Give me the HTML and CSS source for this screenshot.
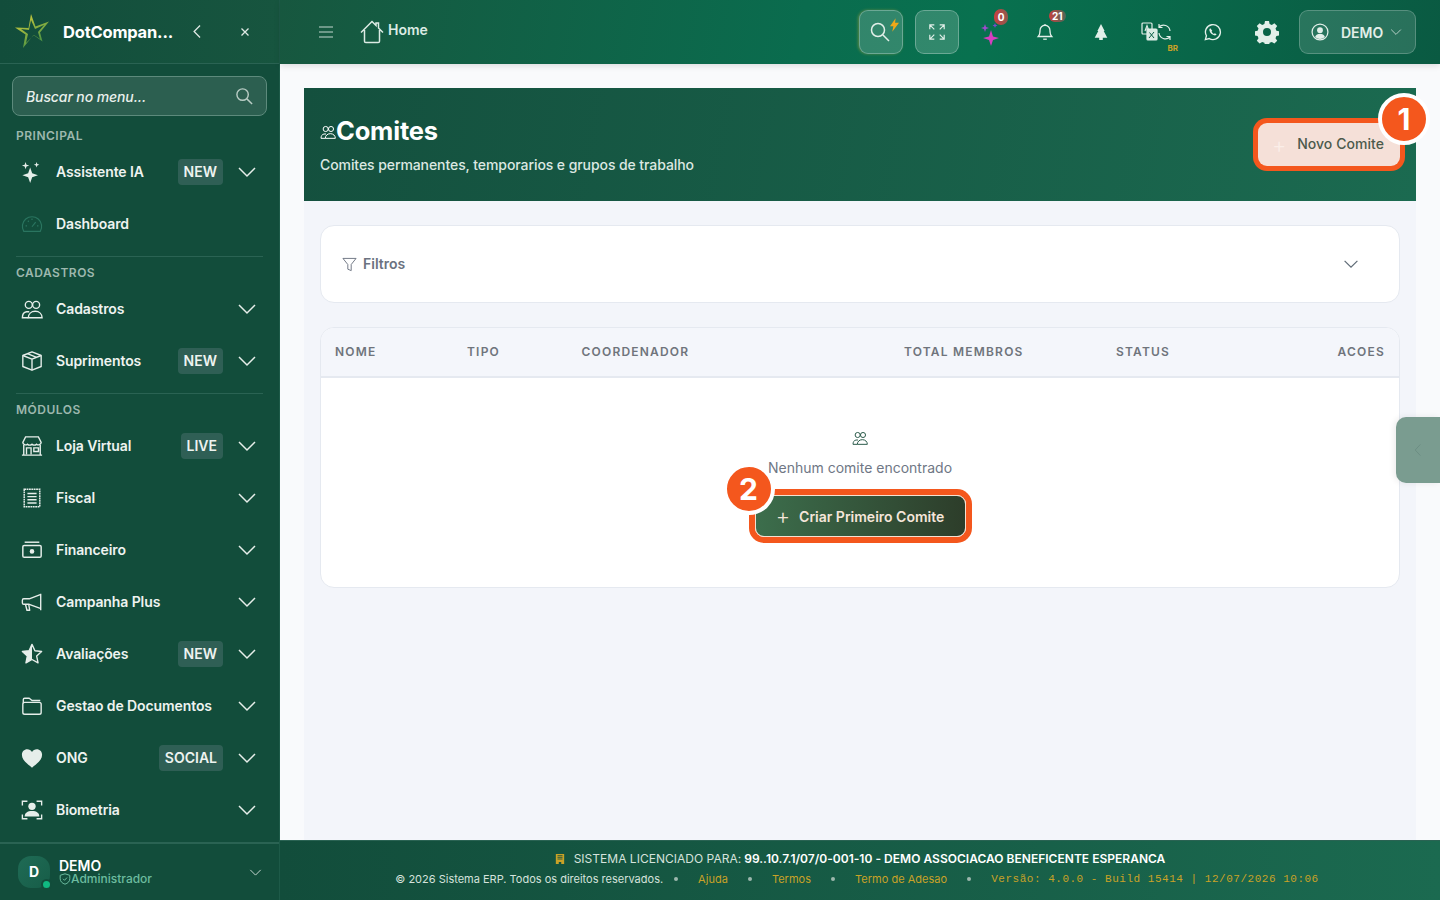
FILE: index.html
```html
<!DOCTYPE html>
<html lang="pt-BR">
<head>
  <meta charset="utf-8">
  <title>Comites</title>
  <link rel="stylesheet" href="styles.css">
</head>
<body>
<svg class="sprite" xmlns="http://www.w3.org/2000/svg">
  <symbol id="i-chev" viewBox="0 0 20 20"><path d="M2 6l8 8 8-8" fill="none" stroke="currentColor" stroke-width="1.5"/></symbol>
  <symbol id="i-people" viewBox="0 0 24 24"><g fill="none" stroke="currentColor" stroke-width="1.5"><circle cx="8.5" cy="7.5" r="3.8"/><circle cx="16.5" cy="7.5" r="3.8"/><path d="M8 21.5H1.5c0-3.5 1.5-6 4.5-6.5h3"/><path d="M8 21.5c0-4 3-7 7.5-7s7.5 3 7.5 7z"/></g></symbol>
</svg>

<div class="app">
  <aside class="sidebar">
    <div class="brand">
      <svg class="brand-logo" viewBox="0 0 40 40">
        <defs>
          <linearGradient id="star" x1="0" y1="0" x2="0.6" y2="1"><stop offset="0" stop-color="#e8d53a"/><stop offset="1" stop-color="#3f8f45"/></linearGradient>
        </defs>
        <path d="M19 2l4.5 12.5L37 9.5l-9 11 2.5 9-9-6.5L11 36l2.5-13.5L3 15.5l13.5.5zM19 8l-2 10-8-1 7 5-2 9 8-8 6 4-2-7 6-7-9 4z" fill="url(#star)" fill-rule="evenodd"/>
      </svg>
      <span class="brand-name">DotCompan...</span>
      <svg class="brand-back" viewBox="0 0 20 20"><path d="M13 3l-7 7 7 7" fill="none" stroke="currentColor" stroke-width="1.5"/></svg>
      <svg class="brand-close" viewBox="0 0 10 10"><path d="M1.5 1.5l7 7M8.5 1.5l-7 7" fill="none" stroke="currentColor" stroke-width="1.3"/></svg>
    </div>

    <div class="menu-search">
      <span>Buscar no menu...</span>
      <svg viewBox="0 0 20 20"><g fill="none" stroke="currentColor" stroke-width="1.5"><circle cx="8" cy="8" r="6"/><path d="M12.5 12.5L18 18"/></g></svg>
    </div>

    <nav class="menu">
      <div class="menu-label first">PRINCIPAL</div>
      <a class="menu-item">
        <svg class="menu-icon" viewBox="0 0 24 24" fill="currentColor"><path d="M10 7l2.2 6.300L18.5 15.500l-6.300 2.200L10 24l-2.200-6.300L1.500 15.500l6.300-2.200zM5 1l1 3 3 1-3 1-1 3-1-3-3-1 3-1zM17 1l.8 2.200L20 4l-2.200.8L17 7l-.8-2.200L14 4l2.200-.8z"/></svg>
        <span class="menu-text">Assistente IA</span><span class="tag">NEW</span>
        <svg class="chev"><use href="#i-chev"/></svg>
      </a>
      <a class="menu-item">
        <svg class="menu-icon dim" viewBox="0 0 24 24"><g fill="none" stroke="currentColor" stroke-width="1.3"><path d="M3 20a10.500 10.500 0 1 1 18 0z"/><path d="M12 15l4-5M5 14h1.500M17.500 14H19M7.500 8.500l1 1M12 6v1.500"/></g></svg>
        <span class="menu-text">Dashboard</span>
      </a>

      <div class="menu-rule"></div>
      <div class="menu-label">CADASTROS</div>
      <a class="menu-item">
        <svg class="menu-icon"><use href="#i-people"/></svg>
        <span class="menu-text">Cadastros</span>
        <svg class="chev"><use href="#i-chev"/></svg>
      </a>
      <a class="menu-item">
        <svg class="menu-icon" viewBox="0 0 24 24"><g fill="none" stroke="currentColor" stroke-width="1.5" stroke-linejoin="round"><path d="M12 2l10 4v12l-10 4-10-4V6z"/><path d="M2 6l10 4 10-4M12 10v12M7 4l10 4"/></g></svg>
        <span class="menu-text">Suprimentos</span><span class="tag">NEW</span>
        <svg class="chev"><use href="#i-chev"/></svg>
      </a>

      <div class="menu-rule"></div>
      <div class="menu-label">MÓDULOS</div>
      <a class="menu-item">
        <svg class="menu-icon" viewBox="0 0 24 24"><g fill="none" stroke="currentColor" stroke-width="1.5"><path d="M5 2h14l3 6a3 3 0 0 1-5 2 3.5 3.5 0 0 1-5 0 3.5 3.5 0 0 1-5 0 3 3 0 0 1-5-2z"/><path d="M3 11v10.5M21 11v10.5M1 22h22M6 21v-7h5v7M14 14h5v4h-5z"/></g></svg>
        <span class="menu-text">Loja Virtual</span><span class="tag">LIVE</span>
        <svg class="chev"><use href="#i-chev"/></svg>
      </a>
      <a class="menu-item">
        <svg class="menu-icon" viewBox="0 0 24 24"><g fill="none" stroke="currentColor" stroke-width="1.6"><path d="M3.5 2.5h17v19h-17z" stroke-dasharray="2 .6"/><path d="M7 7h10M7 10.5h10M7 14h10M7 17.5h10"/></g></svg>
        <span class="menu-text">Fiscal</span>
        <svg class="chev"><use href="#i-chev"/></svg>
      </a>
      <a class="menu-item">
        <svg class="menu-icon" viewBox="0 0 24 24"><g fill="none" stroke="currentColor" stroke-width="1.6"><rect x="2" y="7" width="20" height="13" rx="1.5"/><path d="M4 3.5h16"/></g><circle cx="12" cy="13.5" r="2.5" fill="currentColor"/></svg>
        <span class="menu-text">Financeiro</span>
        <svg class="chev"><use href="#i-chev"/></svg>
      </a>
      <a class="menu-item">
        <svg class="menu-icon" viewBox="0 0 24 24"><g fill="none" stroke="currentColor" stroke-width="1.5" stroke-linejoin="round"><path d="M21.5 3v18M21 4L9 8.5H3A1.5 1.5 0 0 0 1.500 10v3A1.500 1.500 0 0 0 3 14.500h6L21 19"/><path d="M5 15l1.500 6h3L8.500 15"/></g></svg>
        <span class="menu-text">Campanha Plus</span>
        <svg class="chev"><use href="#i-chev"/></svg>
      </a>
      <a class="menu-item">
        <svg class="menu-icon" viewBox="0 0 24 24"><path d="M12 1.500l3.200 7 7.300.8-5.400 5 1.500 7.400L12 18l-6.600 3.700 1.500-7.400-5.400-5 7.300-.8z" fill="none" stroke="currentColor" stroke-width="1.5" stroke-linejoin="round"/><path d="M12 1.500l-3.200 7-7.300.8 5.400 5-1.500 7.400L12 18z" fill="currentColor"/></svg>
        <span class="menu-text">Avaliações</span><span class="tag">NEW</span>
        <svg class="chev"><use href="#i-chev"/></svg>
      </a>
      <a class="menu-item">
        <svg class="menu-icon" viewBox="0 0 24 24"><g fill="none" stroke="currentColor" stroke-width="1.5" stroke-linejoin="round"><path d="M2.500 9V5A1.500 1.500 0 0 1 4 3.500h5L12 6h9"/><rect x="2" y="8" width="20" height="13" rx="2"/></g></svg>
        <span class="menu-text">Gestao de Documentos</span>
        <svg class="chev"><use href="#i-chev"/></svg>
      </a>
      <a class="menu-item">
        <svg class="menu-icon" viewBox="0 0 24 24"><path d="M12 22.500C5 17 1 13.500 1 8.500 1 5 3.500 2.500 6.800 2.500c2.200 0 4 1 5.200 3 1.200-2 3-3 5.200-3C20.500 2.500 23 5 23 8.500c0 5-4 8.500-11 14z" fill="currentColor"/></svg>
        <span class="menu-text">ONG</span><span class="tag">SOCIAL</span>
        <svg class="chev"><use href="#i-chev"/></svg>
      </a>
      <a class="menu-item">
        <svg class="menu-icon" viewBox="0 0 24 24"><g fill="none" stroke="currentColor" stroke-width="1.5"><path d="M1.500 7V2.500H7M17 2.500h5.500V7M1.500 17v4.500H7M17 21.500h5.500V17"/></g><circle cx="12" cy="8" r="4" fill="currentColor"/><path d="M4 19c0-4 3-6 8-6s8 2 8 6z" fill="currentColor"/></svg>
        <span class="menu-text">Biometria</span>
        <svg class="chev"><use href="#i-chev"/></svg>
      </a>
    </nav>

    <div class="side-user">
      <div class="avatar">D<span class="avatar-dot"></span></div>
      <div class="side-user-info">
        <div class="side-user-name">DEMO</div>
        <div class="side-user-role">
          <svg viewBox="0 0 12 12"><path d="M6 .8l4.800 1.500v3.400c0 2.800-2 4.600-4.800 5.500C3.200 10.300 1.200 8.500 1.200 5.700V2.300zM4 5.800l1.500 1.500L8 4.600" fill="none" stroke="currentColor"/></svg>Administrador
        </div>
      </div>
      <svg class="side-user-chev"><use href="#i-chev"/></svg>
    </div>
  </aside>

  <div class="main">
    <header class="topbar">
      <svg class="burger" viewBox="0 0 14 12"><path d="M0 1h14M0 6h14M0 11h14" stroke="currentColor" stroke-width="1.2"/></svg>
      <svg class="home-icon" viewBox="0 0 24 24"><path d="M1 12.500L12 1.500l4 4V3h2.500v5L23 12.500M4.500 10v11.200a1.300 1.300 0 0 0 1.300 1.300h12.400a1.300 1.300 0 0 0 1.300-1.300V10" fill="none" stroke="currentColor" stroke-width="1.5"/></svg>
      <span class="home-text">Home</span>

      <div class="tools">
        <button class="tool boxed glow">
          <svg class="ic-search" viewBox="0 0 20 20"><g fill="none" stroke="currentColor" stroke-width="1.5"><circle cx="8" cy="8" r="6.500"/><path d="M13 13l6 6"/></g></svg>
          <svg class="bolt" viewBox="0 0 8 12"><path d="M5 0L0 7h3l-1 5 6-8H4.500z" fill="#f0a818"/></svg>
        </button>
        <button class="tool boxed">
          <svg class="ic20" viewBox="0 0 20 20"><path d="M2 7V2h5M2 2l5 5M18 7V2h-5M18 2l-5 5M2 13v5h5M2 18l5-5M18 13v5h-5M18 18l-5-5" fill="none" stroke="currentColor" stroke-width="1.3"/></svg>
        </button>
        <button class="tool icons-start">
          <svg class="ic24" viewBox="0 0 24 24"><path d="M11 8l2 6.500 6 1.500-6 2-2 6-2-6-6-2 6-1.500z" fill="#d63fc0"/><path d="M5 1l1 3 3 1-3 1-1 3-1-3-3-1 3-1z" fill="#a04ad0" transform="translate(0 1)"/><path d="M15 1l.7 1.800 1.800.7-1.800.7L15 6l-.7-1.800-1.800-.7 1.800-.7z" fill="#7a4ad0"/></svg>
          <span class="count zero">0</span>
        </button>
        <button class="tool">
          <svg class="ic20" viewBox="0 0 20 20"><g fill="none" stroke="currentColor" stroke-width="1.4"><path d="M10 2.500A5.500 5.500 0 0 0 4.500 8c0 4-1 6-2 7h15c-1-1-2-3-2-7A5.500 5.500 0 0 0 10 2.500zM10 1v1.500"/><path d="M8 18h4"/></g></svg>
          <span class="count many">21</span>
        </button>
        <button class="tool">
          <svg class="ic20" viewBox="0 0 20 20"><path d="M10 1l4 8h-1l4 7.500h-5V19H8v-2.500H3L7 9H6z" fill="currentColor"/></svg>
        </button>
        <button class="tool">
          <svg class="ic-lang" viewBox="0 0 30 20"><g fill="none" stroke="currentColor" stroke-width="1.2"><rect x="1" y="1" width="10" height="11" rx="1"/><rect x="6" y="7" width="10" height="11" rx="1" fill="#d8ebe2"/><path d="M29 9a6.500 6.500 0 0 0-11-4M18 11a6.500 6.500 0 0 0 11 4M18 2v3.500h3.500M29 18v-3.500h-3.500"/></g><path d="M4 9l2-5.500L8 9M4.700 7h2.600" fill="none" stroke="currentColor" stroke-width="1.1"/><path d="M8 16l5-6M8.500 10.500L13 16" stroke="#0a5f47"/></svg>
          <span class="lang-code">BR</span>
        </button>
        <button class="tool">
          <svg class="ic20" viewBox="0 0 20 20"><path d="M1.500 18.500l1.200-4.300a8.300 8.300 0 1 1 3.100 3.100z" fill="none" stroke="currentColor" stroke-width="1.5"/><path d="M7 5.800c-1 .5-1.300 1.700-.8 3 .8 2.200 2.600 4 5 4.800 1.300.4 2.400 0 2.800-1l-2-1.300-1 .8c-1.100-.5-2-1.400-2.600-2.600l.8-1z" fill="currentColor"/></svg>
        </button>
        <button class="tool gear">
          <svg class="ic26" viewBox="0 0 24 24"><path fill-rule="evenodd" d="M10 1h4l.6 3 2.200.9 2.600-1.700 2.800 2.800-1.700 2.600.9 2.200 3 .6v4l-3 .6-.9 2.200 1.700 2.600-2.800 2.800-2.600-1.700-2.200.9-.6 3h-4l-.6-3-2.200-.9-2.600 1.700-2.800-2.800 1.700-2.600-.9-2.200-3-.6v-4l3-.6.900-2.200L1.800 6l2.800-2.800 2.600 1.700L9.400 4zM12 8a4 4 0 1 0 0 8 4 4 0 0 0 0-8z" fill="currentColor"/></svg>
        </button>
        <button class="user-btn">
          <svg class="ic18" viewBox="0 0 20 20"><g fill="none" stroke="currentColor" stroke-width="1.4"><circle cx="10" cy="10" r="8.800"/></g><circle cx="10" cy="8" r="3.200" fill="currentColor"/><path d="M4.500 15.500c1-2.500 3-3.500 5.500-3.500s4.500 1 5.500 3.500a8 8 0 0 1-11 0z" fill="currentColor"/></svg>
          <span>DEMO</span>
          <svg class="user-chev"><use href="#i-chev"/></svg>
        </button>
      </div>
    </header>

    <main class="content">
      <section class="hero">
        <div class="hero-text">
          <h1><svg class="hero-icon"><use href="#i-people"/></svg>Comites</h1>
          <p>Comites permanentes, temporarios e grupos de trabalho</p>
        </div>
        <button class="btn-new tour">
          <span class="btn-plus">+</span><span class="btn-new-text">Novo Comite</span>
          <span class="tour-badge">1</span>
        </button>
      </section>

      <div class="page-body">
        <section class="card filters">
          <svg class="filter-icon" viewBox="0 0 16 16"><path d="M1 1.500h14L9.800 8v6.500l-3.600-1.500V8z" fill="none" stroke="currentColor"/></svg>
          <span class="filter-text">Filtros</span>
          <svg class="filter-chev"><use href="#i-chev"/></svg>
        </section>

        <section class="card list">
          <div class="list-head">
            <span>NOME</span>
            <span>TIPO</span>
            <span>COORDENADOR</span>
            <span>TOTAL MEMBROS</span>
            <span>STATUS</span>
            <span class="right">ACOES</span>
          </div>
          <div class="empty">
            <svg class="empty-icon"><use href="#i-people"/></svg>
            <p>Nenhum comite encontrado</p>
            <button class="btn-first tour">
              <span class="btn-first-plus">+</span>Criar Primeiro Comite
              <span class="tour-badge left">2</span>
            </button>
          </div>
        </section>
      </div>
    </main>

    <footer class="footer">
      <div class="license">
        <svg viewBox="0 0 12 12"><path d="M1 0h10v12H7.500V9.500h-3V12H1z" fill="#c9a227"/><path d="M3 2h6M3 4h6M3 6h6" stroke="#14503e"/></svg>
        <span>SISTEMA LICENCIADO PARA:</span> <b>99..10.7.1/07/0-001-10 - DEMO ASSOCIACAO BENEFICENTE ESPERANCA</b>
      </div>
      <div class="foot-links">
        <span class="copy">© 2026 Sistema ERP. Todos os direitos reservados.</span>
        <i></i><a>Ajuda</a>
        <i></i><a>Termos</a>
        <i></i><a>Termo de Adesao</a>
        <i></i><code>Versão: 4.0.0 - Build 15414 | 12/07/2026 10:06</code>
      </div>
    </footer>
  </div>

  <div class="side-handle">
    <svg viewBox="0 0 10 16"><path d="M8 1L1.500 8 8 15" fill="none" stroke="currentColor"/></svg>
  </div>
</div>
</body>
</html>
```

FILE: styles.css
```css
html, body {
  margin: 0;
  padding: 0;
  height: 100%;
}

body {
  font-family: Inter, "Liberation Sans", sans-serif;
  overflow: hidden;
}

.sprite {
  display: none;
}

button {
  font-family: inherit;
  border: 0;
  cursor: pointer;
}

.app {
  display: flex;
  width: 1440px;
  height: 900px;
  position: relative;
  overflow: hidden;
}

/* sidebar */
.sidebar {
  flex: 0 0 280px;
  width: 280px;
  display: flex;
  flex-direction: column;
  background: #124d3b;
  color: #eef3f0;
  border-right: 1px solid #1d5a48;
  box-sizing: border-box;
}

.brand {
  height: 64px;
  flex: 0 0 64px;
  box-sizing: border-box;
  display: flex;
  align-items: center;
  padding-left: 12px;
  border-bottom: 1px solid #2a6353;
  background: linear-gradient(90deg, #124d3b, #17553f);
}

.brand-logo {
  width: 40px;
  height: 40px;
  flex: none;
}

.brand-name {
  margin-left: 11px;
  width: 112px;
  font-size: 16.5px;
  font-weight: 700;
  color: #fff;
  white-space: nowrap;
  letter-spacing: -0.2px;
}

.brand-back {
  width: 17px;
  height: 17px;
  margin-left: 14px;
  color: #dfe9e4;
}

.brand-close {
  width: 10px;
  height: 10px;
  margin-left: 34px;
  color: #dfe9e4;
}

.menu-search {
  margin: 12px 12px 0;
  height: 40px;
  flex: none;
  display: flex;
  align-items: center;
  justify-content: space-between;
  padding: 0 12px 0 13px;
  box-sizing: border-box;
  width: 255px;
  background: #2c5f50;
  border: 1px solid #5d8a7c;
  border-radius: 8px;
  font-size: 14px;
  font-style: italic;
  font-weight: 500;
  letter-spacing: -0.1px;
  color: #e9f0ec;
}

.menu-search svg {
  width: 19px;
  height: 19px;
  color: #b9cdc5;
}

.menu {
  flex: 1;
  overflow: hidden;
}

.menu-label {
  height: 19px;
  margin-top: 7px;
  padding-left: 16px;
  font-size: 12px;
  line-height: 18px;
  font-weight: 600;
  letter-spacing: 0.5px;
  color: #9db8ae;
}

.menu-label.first {
  margin-top: 11px;
  height: 18px;
  margin-bottom: 1px;
}

.menu-rule {
  margin: 6px 16px 0;
  height: 1px;
  background: #2a6353;
}

.menu-item {
  height: 52px;
  display: flex;
  align-items: center;
  padding: 0 22px 0 20px;
  font-size: 14px;
  font-weight: 600;
  letter-spacing: -0.1px;
}

.menu-icon {
  width: 22px;
  height: 22px;
  flex: none;
  margin: 0 13px 0 1px;
  color: #e6eeea;
}

.menu-icon.dim {
  color: #2a7560;
}

.menu-text {
  flex: 1;
  white-space: nowrap;
  padding-bottom: 2px;
}

.tag {
  height: 26px;
  line-height: 26px;
  padding: 0 6px;
  margin-right: 14px;
  border-radius: 4px;
  background: #2f5f55;
  font-size: 14px;
  font-weight: 600;
  letter-spacing: 0;
}

.chev {
  width: 20px;
  height: 20px;
  flex: none;
  margin-left: auto;
  color: #e6eeea;
}

.tag + .chev {
  margin-left: 0;
}

.side-user {
  flex: 0 0 58px;
  box-sizing: border-box;
  height: 58px;
  display: flex;
  align-items: center;
  padding: 0 17px 0 18px;
  border-top: 2px solid #2a6353;
}

.avatar {
  width: 32px;
  height: 32px;
  flex: none;
  position: relative;
  border-radius: 13px;
  background: linear-gradient(135deg, #1f6b55, #175d48);
  color: #fff;
  font-size: 14px;
  font-weight: 700;
  line-height: 32px;
  text-align: center;
}

.avatar-dot {
  position: absolute;
  right: -2px;
  bottom: -2px;
  width: 7px;
  height: 7px;
  border-radius: 50%;
  background: #10b981;
  border: 2px solid #124d3b;
}

.side-user-info {
  margin-left: 9px;
  flex: 1;
}

.side-user-name {
  font-size: 14px;
  line-height: 13px;
  font-weight: 600;
  color: #fff;
}

.side-user-role {
  display: flex;
  align-items: center;
  font-size: 12px;
  line-height: 14px;
  font-weight: 500;
  color: #6cbc9f;
}

.side-user-role svg {
  width: 12px;
  height: 12px;
}

.side-user-chev {
  width: 13px;
  height: 13px;
  color: #c9d8d2;
}

/* main */
.main {
  flex: 1;
  min-width: 0;
  display: flex;
  flex-direction: column;
  background: #f9fafc;
}

.topbar {
  flex: 0 0 64px;
  height: 64px;
  box-sizing: border-box;
  display: flex;
  align-items: center;
  padding: 0 24px 0 39px;
  background: linear-gradient(100deg, #17573f 0%, #0a6c4e 45%, #08714f 60%, #0a5a42 100%);
  color: #d8ebe2;
  box-shadow: 0 2px 6px rgba(0, 0, 0, .12);
  position: relative;
}

.burger {
  width: 14px;
  height: 12px;
  color: #c4d8d0;
}

.home-icon {
  width: 24px;
  height: 24px;
  margin-left: 27px;
  color: #dcebe4;
}

.home-text {
  margin: 0 0 6px 4px;
  font-size: 14px;
  font-weight: 600;
  color: #dcebe4;
}

.tools {
  margin-left: auto;
  display: flex;
  align-items: center;
  gap: 12px;
}

.tool {
  width: 44px;
  height: 44px;
  padding: 0;
  position: relative;
  display: flex;
  align-items: center;
  justify-content: center;
  background: none;
  color: #e2efe9;
}

.tool.boxed {
  background: rgba(255, 255, 255, .17);
  border: 1px solid rgba(255, 255, 255, .28);
  border-radius: 9px;
  box-sizing: border-box;
}

.tool.glow {
  box-shadow: -1px 0 3px rgba(200, 170, 60, .45);
}

.tool.icons-start {
  margin-left: -4px;
}

.tool.gear {
  margin-left: -2px;
}

.ic20 {
  width: 18px;
  height: 18px;
}

.ic-search {
  width: 20px;
  height: 20px;
  margin-left: -2px;
}

.ic24 {
  width: 24px;
  height: 24px;
  margin: 4px 0 0 5px;
}

.ic26 {
  width: 24px;
  height: 24px;
}

.ic18 {
  width: 18px;
  height: 18px;
}

.ic-lang {
  width: 32px;
  height: 20px;
  margin-left: -2px;
}

.bolt {
  position: absolute;
  top: 7px;
  right: 3px;
  width: 9px;
  height: 14px;
}

.count {
  position: absolute;
  min-width: 8px;
  padding: 0 3px;
  border-radius: 8px;
  background: #b9433f;
  color: #fff;
  font-size: 10px;
  line-height: 14px;
  font-weight: 700;
  text-align: center;
}

.count.zero {
  top: -1px;
  left: 27px;
  padding: 1px 3px;
  background: linear-gradient(90deg, #c9403f, #8c5a4f);
}

.count.many {
  top: 0;
  left: 26px;
  line-height: 12px;
  background: linear-gradient(90deg, #c9403f, #4a6a5a);
}

.lang-code {
  position: absolute;
  right: 1px;
  bottom: 1px;
  font-size: 8px;
  font-weight: 700;
  color: #c9a227;
}

.user-btn {
  width: 117px;
  height: 44px;
  margin-left: -2px;
  box-sizing: border-box;
  display: flex;
  align-items: center;
  padding: 0 11px;
  background: rgba(255, 255, 255, .13);
  border: 1px solid rgba(255, 255, 255, .22);
  border-radius: 9px;
  color: #e2efe9;
  font-size: 14px;
  font-weight: 600;
}

.user-btn span {
  margin-left: 12px;
}

.user-chev {
  width: 12px;
  height: 12px;
  margin-left: 7px;
  color: #c4d8d0;
}

.content {
  flex: 1;
  min-height: 0;
  margin: 24px 24px 0;
  background: #f3f5fa;
  display: flex;
  flex-direction: column;
}

.hero {
  height: 113px;
  flex: none;
  box-sizing: border-box;
  padding: 0 16px;
  display: flex;
  align-items: center;
  justify-content: space-between;
  background: linear-gradient(100deg, #14503e, #1b6a50);
  color: #fff;
}

.hero h1 {
  margin: 1px 0 0;
  display: flex;
  align-items: center;
  font-size: 25.5px;
  line-height: 30px;
  font-weight: 700;
  letter-spacing: -0.2px;
}

.hero-icon {
  width: 16px;
  height: 16px;
  margin-top: 2px;
}

.hero p {
  margin: 9px 0 0;
  font-size: 14px;
  line-height: 20px;
  font-weight: 500;
  letter-spacing: -0.08px;
  color: #dce8e2;
}

.tour {
  position: relative;
  box-shadow: 0 0 0 5px #f4571d;
}

.tour-badge {
  position: absolute;
  top: -30px;
  right: -30px;
  width: 44px;
  height: 44px;
  border: 4px solid #fff;
  border-radius: 50%;
  background: #f4571d;
  color: #fff;
  font-size: 30px;
  font-weight: 700;
  line-height: 44px;
  text-align: center;
}

.tour-badge.left {
  top: -33px;
  right: auto;
  left: -33px;
}

.btn-new {
  width: 142px;
  height: 43px;
  padding: 0 16px 0 14px;
  display: flex;
  align-items: center;
  justify-content: space-between;
  background: #f5e0d8;
  border-radius: 9px;
  color: #4c5a4c;
  font-size: 14px;
  font-weight: 500;
}

.btn-new-text {
  padding-bottom: 2px;
  letter-spacing: 0.05px;
}

.btn-plus {
  font-size: 22px;
  font-weight: 300;
  color: #fbeee8;
}

.page-body {
  flex: 1;
  padding: 24px 16px 0;
  display: flex;
  flex-direction: column;
  gap: 24px;
}

.card {
  background: #fff;
  border: 1px solid #e5e9f0;
  border-radius: 14px;
}

.filters {
  height: 78px;
  box-sizing: border-box;
  display: flex;
  align-items: center;
  padding: 0 40px 0 21px;
  color: #6b7280;
}

.filter-icon {
  width: 15px;
  height: 15px;
}

.filter-text {
  margin-left: 6px;
  padding-bottom: 2px;
  font-size: 14px;
  font-weight: 600;
}

.filter-chev {
  margin-left: auto;
  width: 16px;
  height: 16px;
  color: #5f6b76;
}

.list {
  height: 261px;
  box-sizing: border-box;
  overflow: hidden;
}

.list-head {
  display: grid;
  grid-template-columns: 132px 114.5px 322.5px 212px 1fr 100px;
  align-items: center;
  height: 50px;
  box-sizing: border-box;
  padding: 0 14px 2px;
  background: #f4f6fb;
  border-bottom: 2px solid #e5e9f0;
  color: #6f747c;
  font-size: 12px;
  font-weight: 600;
  letter-spacing: 1.2px;
}

.right {
  text-align: right;
}

.empty {
  display: flex;
  flex-direction: column;
  align-items: center;
  padding-top: 52px;
}

.empty-icon {
  width: 16px;
  height: 16px;
  color: #2d5c4c;
}

.empty p {
  margin: 12px 0 17px;
  font-size: 14px;
  line-height: 20px;
  color: #6f7785;
}

.btn-first {
  width: 211px;
  height: 42px;
  padding: 0;
  box-sizing: border-box;
  display: flex;
  align-items: center;
  justify-content: center;
  border: 1px solid #f5e0d0;
  border-radius: 9px;
  background: linear-gradient(90deg, #3c6e4c, #2d3d2a);
  color: #f5e6da;
  font-size: 14px;
  font-weight: 600;
  box-shadow: 0 0 0 6px #f4571d;
}

.btn-first-plus {
  margin-right: 9px;
  font-size: 22px;
  font-weight: 300;
  line-height: 20px;
}

/* footer */
.footer {
  flex: 0 0 60px;
  height: 60px;
  box-sizing: border-box;
  padding-top: 9px;
  background: linear-gradient(90deg, #124d3b, #1b6a50);
  border-top: 1px solid #2a6353;
  color: #d5e2dc;
  text-align: center;
  font-size: 12px;
  position: relative;
}

.license {
  line-height: 18px;
  display: flex;
  justify-content: center;
  align-items: center;
  gap: 3px;
  letter-spacing: 0.02px;
}

.license svg {
  width: 10px;
  height: 12px;
  margin-right: 6px;
}

.license b {
  color: #fff;
  font-weight: 600;
}

.foot-links {
  margin-top: 3px;
  padding-right: 6px;
  display: flex;
  justify-content: center;
  align-items: center;
  gap: 20px;
  font-size: 11px;
  line-height: 16px;
}

.foot-links i {
  width: 4px;
  height: 4px;
  border-radius: 50%;
  background: #9db8ae;
}

.copy {
  margin-right: -9px;
}

.foot-links a {
  color: #c9a227;
  letter-spacing: 0.02px;
}

.foot-links code {
  font-family: "Liberation Mono", monospace;
  letter-spacing: 0.52px;
  color: #c9a227;
}

.side-handle {
  position: absolute;
  top: 417px;
  right: 0;
  width: 44px;
  height: 66px;
  display: flex;
  align-items: center;
  justify-content: center;
  border-radius: 10px 0 0 10px;
  background: #7a9c90;
  color: #6a8a80;
  box-shadow: -2px 0 6px rgba(0, 0, 0, .08);
}

.side-handle svg {
  width: 8px;
  height: 14px;
}
```
